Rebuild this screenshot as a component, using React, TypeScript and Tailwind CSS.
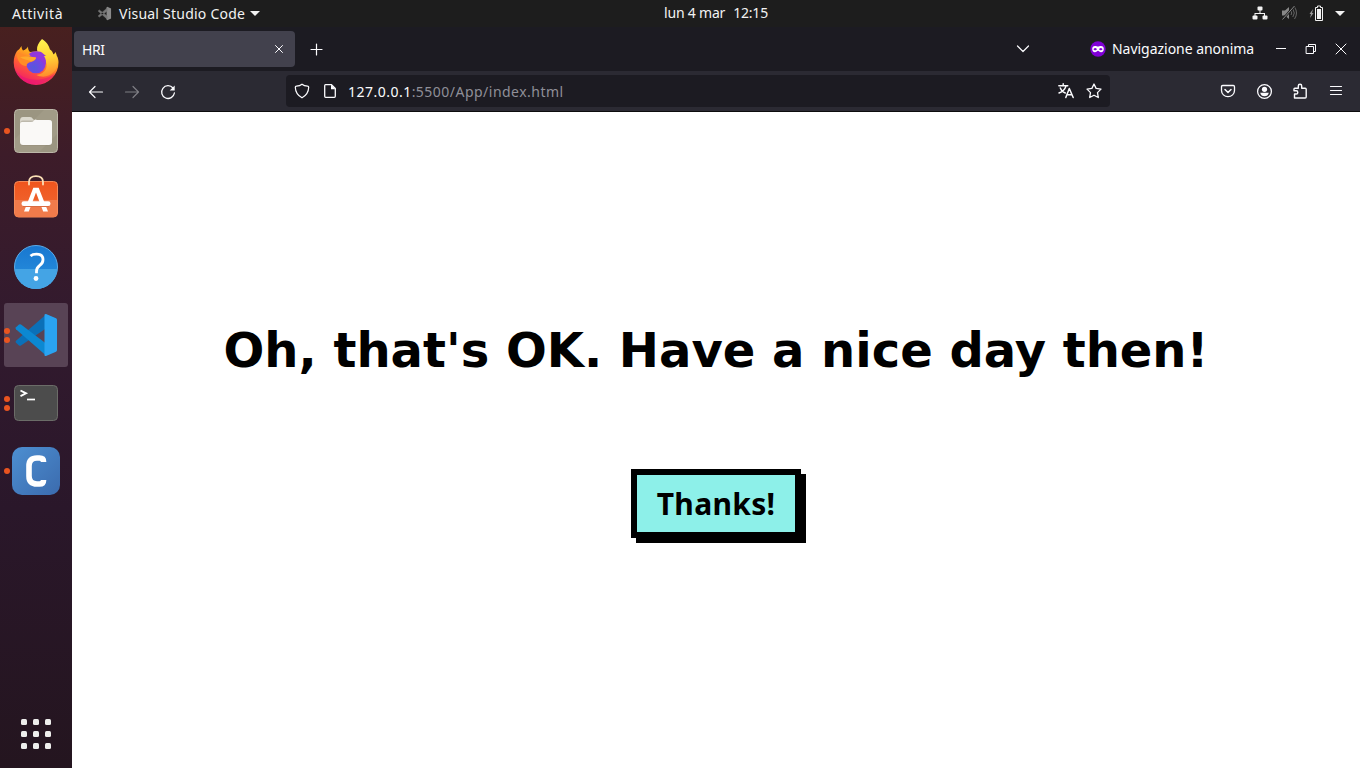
import type { ReactNode } from "react";

function Icon({ children, className = "" }: { children: ReactNode; className?: string }) {
  return (
    <svg
      viewBox="0 0 16 16"
      className={"block size-4 shrink-0 " + className}
      fill="none"
      stroke="#fbfbfe"
      strokeWidth="1.3"
      strokeLinecap="round"
      strokeLinejoin="round"
    >
      {children}
    </svg>
  );
}

function TopBar() {
  return (
    <header className="grid h-[27px] shrink-0 grid-cols-[1fr_auto_1fr] items-center bg-[#1d1d1d] text-[14px] leading-[27px] text-[#f2f2f2]">
      <div className="flex items-center pl-3">
        <span className="w-[85px] tracking-[0.6px]">Attività</span>
        <svg viewBox="0 0 16 16" className="mr-[7px] block size-[15px]">
          <path d="M11 .8 15 2.600v10.800L11 15.200 10.200 14.600V1.400z" fill="#8a8a8a" />
          <path d="M10.800 2 1.200 10.600l1.300 1.200 8.400-6.500zM10.800 14 1.200 5.400l1.300-1.200 8.400 6.500z" fill="#777" stroke="#777" strokeWidth=".5" />
        </svg>
        <span className="tracking-[0.23px]">Visual Studio Code</span>
        <svg viewBox="0 0 10 5" className="ml-[5px] block h-[5px] w-[10px]">
          <path d="M0 0h10L5 5z" fill="#f2f2f2" />
        </svg>
      </div>
      <div className="-mt-[2px] flex gap-[8px] pl-[72px] tracking-[-0.2px]">
        <span>lun 4 mar</span>
        <span>12:15</span>
      </div>
      <div className="flex items-center justify-end pr-[15px]">
        <svg viewBox="0 0 16 14" className="-mt-px mr-[13px] block h-[14px] w-4" fill="#f2f2f2">
          <rect x="5.500" y="0.500" width="5" height="4" rx="1" />
          <path d="M7.500 4h1v3h4.500v3h-1V8H3.500v2h-1V7h5z" />
          <rect x="0.500" y="9.500" width="5" height="4" rx="1" />
          <rect x="10.500" y="9.500" width="5" height="4" rx="1" />
        </svg>
        <svg viewBox="0 0 16 16" className="-mt-px mr-[12px] block size-4">
          <path d="M1 5.500h3L8 2v12l-4-3.500H1z" fill="#888" />
          <path d="M10 6q1.500 2 0 4M11.800 4q3 4 0 8M13.500 2q4 6 0 12" fill="none" stroke="#666" />
          <path d="M1.500 14.500 13.500 1" stroke="#1d1d1d" strokeWidth="2.500" />
          <path d="M1.500 14.500 13.500 1" stroke="#888" />
        </svg>
        <svg viewBox="0 0 15 16" className="-mt-[2px] mr-[11px] block h-4 w-[15px]">
          <path d="M4 4 .5 9H2L1 13l3.500-5H3z" fill="#999" />
          <path d="M8.500 1h3v1.500h2v13H6.500v-13h2z" fill="none" stroke="#f2f2f2" />
          <path d="M8 4h4v10H8z" fill="#f2f2f2" />
        </svg>
        <svg viewBox="0 0 10 5" className="block h-[5px] w-[10px]">
          <path d="M0 0h10L5 5z" fill="#f2f2f2" />
        </svg>
      </div>
    </header>
  );
}

function DockItem({ children, dots = 0, active = false }: { children: ReactNode; dots?: number; active?: boolean }) {
  return (
    <div className={"flex h-16 w-16 items-center rounded-[3px] " + (active ? "bg-[#584355]" : "")}>
      <div className="flex w-2 flex-col gap-[3px]">
        {Array.from({ length: dots }, (_, i) => (
          <i key={i} className="block size-[6px] rounded-full bg-[#e95420]" />
        ))}
      </div>
      <svg viewBox="0 0 48 48" className="block size-12">
        {children}
      </svg>
    </div>
  );
}

function Dock() {
  return (
    <nav className="flex w-[72px] shrink-0 flex-col gap-1 bg-[linear-gradient(180deg,#48201f_0%,#3d1c29_17%,#321a2e_40%,#2a172a_65%,#24151f_100%)] pl-1 pt-[4px]">
      <DockItem>
        <defs>
          <linearGradient id="fxBody" x1=".8" y1="0" x2=".3" y2="1">
            <stop offset="0" stopColor="#fff44f" />
            <stop offset=".3" stopColor="#ffac1e" />
            <stop offset=".6" stopColor="#ff5b36" />
            <stop offset="1" stopColor="#f0156e" />
          </linearGradient>
          <linearGradient id="fxTail" x1=".4" y1="0" x2=".5" y2="1">
            <stop offset="0" stopColor="#fff44f" />
            <stop offset=".5" stopColor="#ffd236" />
            <stop offset="1" stopColor="#ff8a2c" />
          </linearGradient>
          <radialGradient id="fxGlobe" cx=".4" cy=".7" r=".7">
            <stop offset="0" stopColor="#5558dc" />
            <stop offset=".6" stopColor="#7446e4" />
            <stop offset="1" stopColor="#a52fd0" />
          </radialGradient>
        </defs>
        <path d="M5 12c2-1 3-3 4.500-5 0 2 .5 3 1.500 4.500C13 11 15 9.500 16 7.500c0 3 .6 4 2 5.500L28 12l12 2c2.500 1.500 3 4 3.500 5l1.500-2c1 2.500 1.500 4 1.500 6.500A22.400 22.400 0 0 1 1.700 23.500C1.700 19 3 15 5 12z" fill="url(#fxBody)" />
        <path d="M2.500 29C8 42 30 45 43.500 34A22.400 22.400 0 0 1 2.500 29z" fill="#e5107c" opacity=".5" />
        <path d="M30 0c5 3 7 7 8 10.500 2 1 3 3 3.500 5.500l2-3c3 7 3 14-1 19-5 6-12 7-18 4 9-1 13-9 8-16C23 15 23 7 30 0z" fill="url(#fxTail)" />
        <circle cx="24" cy="24.500" r="9.800" fill="url(#fxGlobe)" />
        <path d="M17 15c4-4 12-3 14-.5l3 2.500h-2c2 3 2.500 6 1 9-2-5-8-7.500-12-6.500z" fill="#9038dc" />
        <path d="M5 15c5-1 8 3 12 2.500l7 1c0 2-2 3.500-5 4.500-3 .6-4.500 2-4.500 4C8 27 5 21 5 15z" fill="#ff8c26" />
        <path d="M8 18c4-1 7-.5 9-.5l7 1c0 2-3 3.500-5 4-3-2-7-1.500-11-4.500z" fill="#ffa92a" />
      </DockItem>
      <DockItem dots={1}>
        <rect x="2.500" y="2.500" width="43" height="43" rx="4" fill="#9b9581" stroke="#bcb7a8" />
        <path d="M3 32 32 3h9q4 0 4 4v20L27 45H7q-4 0-4-4z" fill="#aaa490" opacity=".4" />
        <path d="M8 14q0-4 3-4h7q2 0 3 2l1 1h15q3 0 3 3v8H8z" fill="#dcd9ce" />
        <rect x="8" y="13.500" width="32" height="25" rx="3" fill="#77715e" opacity=".3" />
        <path d="M8 17q0-2 2-2h9q2 0 3-1.500t3-.5h12q3 0 3 3v19q0 3-3 3H11q-3 0-3-3z" fill="#faf9f7" />
      </DockItem>
      <DockItem>
        <defs>
          <linearGradient id="bagTop" x1="0" y1="0" x2="0" y2="1">
            <stop offset="0" stopColor="#f0551d" />
            <stop offset="1" stopColor="#ef6a35" />
          </linearGradient>
        </defs>
        <rect x="2.500" y="6.500" width="43" height="35.500" rx="4" fill="url(#bagTop)" stroke="#f58a58" />
        <path d="M3 25h42v13q0 4-4 4H7q-4 0-4-4z" fill="#f07b4b" />
        <path d="M17 9.500V7q0-5.800 7-5.800T31 7v2.500" fill="none" stroke="#fadfb5" strokeWidth="1.800" strokeLinecap="round" />
        <path d="M21.300 12.700h5.400L36 36.500h-4.800L24 17.500l-7.200 19H12z" fill="#fff" />
        <rect x="9.500" y="26.300" width="29" height="4.700" rx="2.300" fill="#fff" />
        <path d="M11 31.500h26" stroke="#d96b40" />
      </DockItem>
      <DockItem>
        <defs>
          <linearGradient id="helpBlue" x1="0" y1="0" x2="0" y2="1">
            <stop offset="0" stopColor="#1877d0" />
            <stop offset="1" stopColor="#2a92df" />
          </linearGradient>
        </defs>
        <circle cx="24" cy="24" r="21.500" fill="url(#helpBlue)" stroke="#5aabe8" />
        <path d="M3 26h42a21 20 0 0 1-42 0z" fill="#44a4e5" />
        <path d="M18.500 13q2-1.800 6-1.800 6.500 0 6.500 5.500 0 3.500-3.500 6-3 2.500-3 5.500v2" fill="none" stroke="#fff" strokeWidth="2.800" />
        <circle cx="24" cy="35.500" r="2.400" fill="#fff" />
      </DockItem>
      <DockItem dots={2} active>
        <path d="M34 3.500 45 8 36 16 9 34.500q-1 .7-2 0l-3-2.700q-1-1 0-2z" fill="#0b70b8" />
        <path d="M34 44.500 4 18.200q-1-1 0-2l3-2.700q1-.7 2 0L36 34z" fill="#0c88d2" />
        <path d="M34 3 44 7.300q1 .5 1 1.700v30q0 1.200-1 1.700L34 45q-1 .3-1.500-.8V3.800Q33 2.700 34 3z" fill="#2aa3f1" />
      </DockItem>
      <DockItem dots={2}>
        <rect x="2.500" y="6.500" width="43" height="35" rx="4" fill="#4c4c4c" stroke="#6b6c68" />
        <path d="M8.500 11.500 14 14.300l-5.500 2.800" fill="none" stroke="#fff" strokeWidth="1.900" />
        <path d="M15 20.500h8" stroke="#fff" strokeWidth="1.700" />
      </DockItem>
      <DockItem dots={1}>
        <defs>
          <linearGradient id="cBlue" x1="0" y1="0" x2="1" y2="1">
            <stop offset="0" stopColor="#4d8fd1" />
            <stop offset="1" stopColor="#3b6bae" />
          </linearGradient>
        </defs>
        <rect width="48" height="48" rx="10" fill="url(#cBlue)" />
        <path d="M31.500 15v-.5q0-3.500-4-3.500H25q-8 0-8 8v10q0 8 8 8h2.500q4 0 4-3.500V33" fill="none" stroke="#fff" strokeWidth="5.600" />
      </DockItem>
      <div className="mb-[19px] ml-[17px] mt-auto grid grid-cols-3 gap-[6px] self-start">
        {Array.from({ length: 9 }, (_, i) => (
          <i key={i} className="block size-[6px] rounded-[1.5px] bg-[#eeeeec]" />
        ))}
      </div>
    </nav>
  );
}

function TabStrip() {
  return (
    <div className="flex h-[44px] shrink-0 items-center bg-[#1c1b22] text-[14px] text-[#fbfbfe]">
      <div className="ml-[2px] flex h-9 w-[221px] items-center justify-between rounded-[4px] bg-[#42414d] pl-2 pr-2">
        <span className="tracking-[-0.4px]">HRI</span>
        <Icon>
          <path d="m4.500 4.500 7 7M11.500 4.500l-7 7" strokeWidth="1" />
        </Icon>
      </div>
      <Icon className="ml-[14px] mt-px">
        <path d="M7.500 2v11M2 7.500h11" strokeWidth="1.200" />
      </Icon>
      <div className="ml-auto flex items-center pr-[11px]">
        <Icon className="mr-[59px]">
          <path d="m2.500 5 5.500 5.500L13.500 5" strokeWidth="1.200" />
        </Icon>
        <Icon className="mr-[6px]">
          <circle cx="8" cy="8" r="7.700" fill="#8000d7" stroke="none" />
          <path
            fillRule="evenodd"
            stroke="none"
            fill="#fff"
            d="M5 5c1.300 0 2.200.6 3 .6S9.700 5 11 5c1.800 0 2.800 1.200 2.800 3s-1 3.200-2.700 3.200C9.500 11.200 8.800 9.800 8 9.800s-1.500 1.400-3.100 1.400C3.200 11.200 2.200 9.800 2.200 8S3.200 5 5 5zM5.200 7C4.200 7 3.500 7.900 3.500 8.200s.7 1 1.700 1 1.700-.7 1.700-1S6.200 7 5.200 7zm5.600 0c-1 0-1.700.9-1.700 1.200s.7 1 1.700 1 1.700-.7 1.700-1S11.800 7 10.800 7z"
          />
        </Icon>
        <span className="-mt-[2px] w-[161px] whitespace-nowrap tracking-[-0.03px]">Navigazione anonima</span>
        <div className="flex gap-[14px]">
          <Icon>
            <path d="M3 7.500h10" strokeWidth="1" strokeLinecap="butt" />
          </Icon>
          <Icon>
            <path d="M3.500 5.500h7v7h-7zM5.500 5V3.500h7v7H11" strokeWidth="1" strokeLinejoin="miter" />
          </Icon>
          <Icon>
            <path d="m3 3 10 10M13 3 3 13" strokeWidth="1" />
          </Icon>
        </div>
      </div>
    </div>
  );
}

function Toolbar() {
  return (
    <div className="flex h-[41px] shrink-0 items-center border-b border-[#0c0c0d] bg-[#2b2a33] pl-4 text-[14px]">
      <div className="mt-px flex w-[198px] gap-5">
        <Icon>
          <path d="M14.500 8h-13M7 2.500 1.500 8 7 13.500" strokeWidth="1.200" />
        </Icon>
        <Icon className="opacity-40">
          <path d="M1.500 8h13M9 2.500 14.500 8 9 13.500" strokeWidth="1.200" />
        </Icon>
        <Icon>
          <path d="M13 4A6.400 6.400 0 1 0 14.400 9" strokeWidth="1.300" />
          <path d="M14.700 1.500v5h-5z" fill="#fbfbfe" stroke="none" />
        </Icon>
      </div>
      <div className="flex h-8 w-[824px] items-center rounded-[4px] bg-[#1c1b22] px-2">
        <Icon className="mr-3">
          <path d="M8 1.200q2 1.600 5.700 2 1 0 1 1-.2 7-6.700 10.600Q1.500 11.200 1.300 4.200q0-1 1-1Q6 2.800 8 1.200z" strokeWidth="1.200" />
        </Icon>
        <Icon className="mr-[10px]">
          <path d="M3.500 1.700h6L13.300 5.500v7.800q0 1-1 1H3.700q-1 0-1-1V2.700q0-1 .8-1z" strokeWidth="1.300" />
          <path d="M9 1.500v4.700h4.500z" fill="#fbfbfe" stroke="none" />
        </Icon>
        <span className="grow tracking-[0.48px] text-[#8f8f98]">
          <span className="text-[#fbfbfe]">127.0.0.1</span>:5500/App/index.html
        </span>
        <Icon className="mr-3">
          <path d="M.8 2.700h9M5.200 .8v1.800M2.300 5c1 3 3 4.300 5 5M8 3Q6.500 8 1 10" strokeWidth="1.400" />
          <path d="m7.800 14.500 3.500-9 3.900 9M9 11.800h5" strokeWidth="1.500" />
        </Icon>
        <Icon>
          <path d="m8 1 2.100 4.400 4.900.7-3.500 3.500.8 4.900L8 12.200l-4.300 2.300.8-4.900L1 6.100l4.900-.7z" strokeWidth="1.300" />
        </Icon>
      </div>
      <div className="ml-auto mr-4 flex gap-5">
        <Icon>
          <path d="M2.700 2.500h10.600q1.200 0 1.200 1.200V7.500a6.500 6.200 0 0 1-13 0V3.700q0-1.200 1.200-1.200z" />
          <path d="m5 6.500 3 3 3-3" strokeWidth="1.500" />
        </Icon>
        <Icon className="translate-x-[0.5px] translate-y-[0.5px]">
          <circle cx="8" cy="8" r="6.900" />
          <circle cx="8" cy="5.800" r="2.600" fill="#fbfbfe" stroke="none" />
          <path d="M3.700 9.300h8.600Q11.500 12.800 8 12.800T3.700 9.300z" fill="#fbfbfe" stroke="none" />
        </Icon>
        <Icon>
          <path d="M2.500 15v-4h1.700a1.500 1.500 0 0 0 0-3.200H2V6q0-.8.800-.8h3.500V3a1.700 1.700 0 0 1 3.400 0v2.200h3.500q1 0 1 1V14q0 1-1 1z" strokeWidth="1.400" />
        </Icon>
        <Icon>
          <path d="M2.500 3.500h11M2.500 7.500h11M2.500 11.500h11" strokeWidth="1.200" />
        </Icon>
      </div>
    </div>
  );
}

export default function App() {
  return (
    <div className="flex h-[768px] w-[1360px] flex-col overflow-hidden bg-white font-['Noto_Sans',sans-serif]">
      <TopBar />
      <div className="flex min-h-0 grow">
        <Dock />
        <div className="flex min-w-0 grow flex-col">
          <TabStrip />
          <Toolbar />
          <main className="flex grow flex-col items-center bg-white pt-[210px] text-black">
            <h1 className="whitespace-nowrap font-['DejaVu_Sans',sans-serif] text-[48px] font-bold leading-[56px]">
              Oh, that's OK. Have a nice day then!
            </h1>
            <button className="mt-[91px] h-[69px] w-[170px] whitespace-nowrap border-[6px] border-black bg-[#8df0e9] text-[30px] font-bold leading-[57px] tracking-[0.3px] shadow-[5px_5px_0_#000]">
              Thanks!
            </button>
          </main>
        </div>
      </div>
    </div>
  );
}
